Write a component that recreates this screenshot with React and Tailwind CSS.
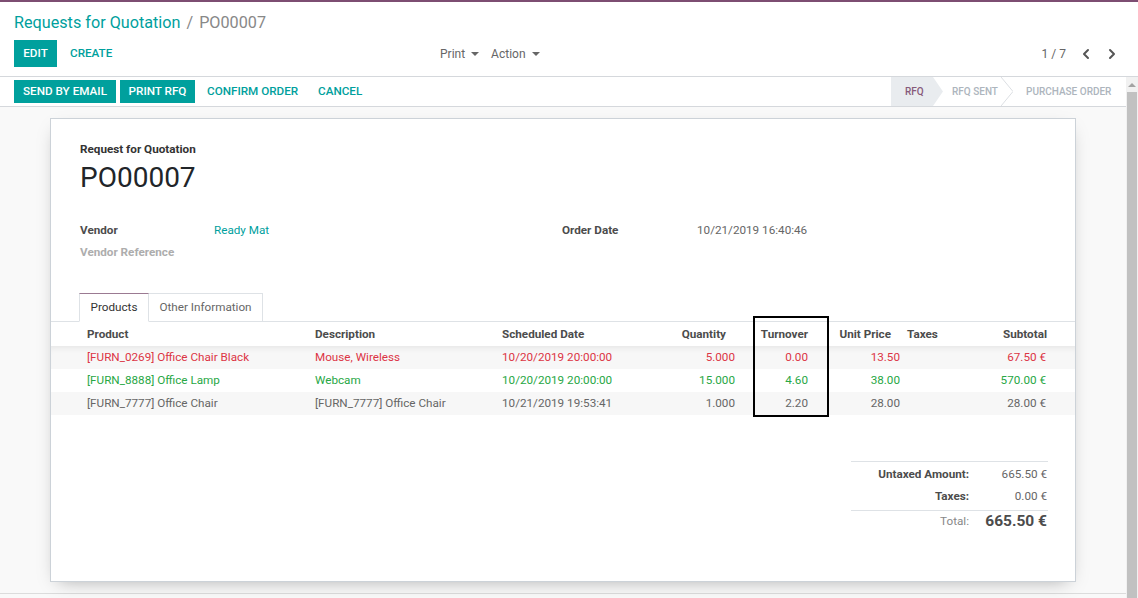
import React from 'react';
import { ChevronLeft, ChevronRight } from 'lucide-react';

function Caret() {
  return <span className="inline-block ml-[6px] w-0 h-0 border-x-[4px] border-x-transparent border-t-[4px] border-t-[#666]" />;
}

const rows = [
  { c: 'text-[#dc3545]', bg: 'bg-[#f7f7f7] shadow-[inset_0_6px_6px_-4px_rgba(0,0,0,0.07)]', p: '[FURN_0269] Office Chair Black', d: 'Mouse, Wireless', s: '10/20/2019 20:00:00', q: '5.000', t: '0.00', u: '13.50', st: '67.50 €' },
  { c: 'text-[#28a745]', bg: 'bg-white', p: '[FURN_8888] Office Lamp', d: 'Webcam', s: '10/20/2019 20:00:00', q: '15.000', t: '4.60', u: '38.00', st: '570.00 €' },
  { c: 'text-[#666]', bg: 'bg-[#f7f7f7]', p: '[FURN_7777] Office Chair', d: '[FURN_7777] Office Chair', s: '10/21/2019 19:53:41', q: '1.000', t: '2.20', u: '28.00', st: '28.00 €' },
];

export default function App() {
  return (
    <div className="h-[598px] w-[1138px] flex flex-col overflow-hidden font-['Roboto','Liberation_Sans',sans-serif] text-[11.7px] text-[#4c4c4c] bg-white">
      <div className="h-[2px] bg-[#7d4d72] shrink-0" />
      {/* control panel */}
      <div className="shrink-0 h-[75px] border-b border-[#d5d8dc] px-[14px] pt-[8px]">
        <div className="h-[24px] pt-[2px] leading-[22px] text-[16.2px] flex items-center whitespace-nowrap">
          <span className="text-[#00a09d]">Requests for Quotation</span>
          <span className="text-[#888] mx-[6px]">/</span>
          <span className="text-[#888]">PO00007</span>
        </div>
        <div className="mt-[6px] h-[27px] flex items-center">
          <div className="w-[426px] flex items-center">
            <div className="h-[27px] w-[43px] bg-[#00a09d] text-white font-medium flex items-center justify-center">EDIT</div>
            <div className="ml-[13px] text-[#00a09d] font-medium">CREATE</div>
          </div>
          <div className="flex items-center text-[12px] text-[#666]">
            <span className="flex items-center">Print<Caret /></span>
            <span className="flex items-center ml-[12px]">Action<Caret /></span>
          </div>
          <div className="ml-auto flex items-center text-[12px] text-[#666] pr-[4px]">
            <span>1 / 7</span>
            <ChevronLeft className="ml-[12px]" size={16} strokeWidth={3} color="#555" />
            <ChevronRight className="ml-[10px]" size={16} strokeWidth={3} color="#555" />
          </div>
        </div>
      </div>
      {/* main */}
      <div className="flex-1 flex min-h-0">
        <div className="flex-1 flex flex-col bg-[#f9f9f9] min-w-0">
          {/* statusbar */}
          <div className="shrink-0 h-[30px] bg-white border-b border-[#d5d8dc] flex items-center pl-[14px] font-medium whitespace-nowrap">
            <div className="h-[23px] w-[102px] bg-[#00a09d] text-white flex items-center justify-center">SEND BY EMAIL</div>
            <div className="ml-[4px] h-[23px] w-[75px] bg-[#00a09d] text-white flex items-center justify-center">PRINT RFQ</div>
            <div className="ml-[12px] w-[111px] text-[#00a09d]">CONFIRM ORDER</div>
            <div className="text-[#00a09d]">CANCEL</div>
            <div className="ml-auto self-stretch flex items-stretch text-[10px] font-medium">
              <div className="w-[52px] bg-[#e9ecef] text-[#875a7b] flex items-center pl-[14px] [clip-path:polygon(0_0,calc(100%-10px)_0,100%_50%,calc(100%-10px)_100%,0_100%)]">RFQ</div>
              <div className="pl-[9px] w-[55px] text-[#adb5bd] flex items-center">RFQ SENT</div>
              <div className="w-[28px] flex items-center pl-[3px]">
                <svg width="12" height="29" viewBox="0 0 12 29"><polyline points="0,0 12,14.5 0,29" fill="none" stroke="#dcdfe3" strokeWidth="1" /></svg>
              </div>
              <div className="w-[100px] text-[#adb5bd] flex items-center">PURCHASE ORDER</div>
            </div>
          </div>
          {/* sheet */}
          <div className="relative shrink-0 mx-auto mt-[11px] w-[1026px] h-[464px] bg-white border border-[#ccd2d8] shadow-[0_6px_18px_-8px_rgba(0,0,0,0.35)] px-[29px] pt-[21px]">
            <div className="leading-[18px] font-bold text-[#333]">Request for Quotation</div>
            <div className="mt-[3px] text-[28px] leading-[34px] text-[#212529]">PO00007</div>
            <div className="mt-[24px] flex">
              <div className="w-[482px]">
                <div className="flex h-[22px] pt-[2px] items-center">
                  <span className="w-[134px] font-bold">Vendor</span>
                  <span className="text-[#00a09d]">Ready Mat</span>
                </div>
                <div className="flex h-[22px] pt-[2px] items-center">
                  <span className="font-bold text-[#adadad]">Vendor Reference</span>
                </div>
              </div>
              <div>
                <div className="flex h-[22px] pt-[2px] items-center">
                  <span className="w-[135px] font-bold">Order Date</span>
                  <span className="text-[#666]">10/21/2019 16:40:46</span>
                </div>
              </div>
            </div>
            {/* tabs */}
            <div className="mt-[30px] -mx-[29px] pl-[28px] flex border-b border-[#dee2e6] h-[29px]">
              <div className="h-[29px] w-[70px] bg-white border border-[#dee2e6] border-t-[#9b7a92] border-b-white flex items-center justify-center text-[#333]">Products</div>
              <div className="h-[28px] w-[114px] border border-l-0 border-b-0 border-[#dee2e6] flex items-center justify-center text-[#666]">Other Information</div>
            </div>
            {/* table */}
            <div className="-mx-[29px]">
              <div className="flex h-[24px] pt-[1px] items-center font-bold whitespace-nowrap">
                <div className="w-[28px]" />
                <div className="w-[228px] pl-[8px]">Product</div>
                <div className="w-[187px] pl-[8px]">Description</div>
                <div className="w-[159px] pl-[8px]">Scheduled Date</div>
                <div className="w-[90px] pr-[17px] text-right">Quantity</div>
                <div className="w-[73px] pr-[8px] text-right">Turnover</div>
                <div className="w-[84px] pr-[9px] text-right">Unit Price</div>
                <div className="w-[60px] pl-[7px]">Taxes</div>
                <div className="w-[95px] pr-[8px] text-right">Subtotal</div>
              </div>
              {rows.map((r, i) => (
                <div key={i} className={`flex h-[23px] pt-[1px] items-center whitespace-nowrap ${r.c} ${r.bg}`}>
                  <div className="w-[28px]" />
                  <div className="w-[228px] pl-[8px]">{r.p}</div>
                  <div className="w-[187px] pl-[8px]">{r.d}</div>
                  <div className="w-[159px] pl-[8px]">{r.s}</div>
                  <div className="w-[90px] pr-[8px] text-right">{r.q}</div>
                  <div className="w-[73px] pr-[8px] text-right">{r.t}</div>
                  <div className="w-[84px] text-right">{r.u}</div>
                  <div className="w-[60px] pl-[7px]" />
                  <div className="w-[95px] pr-[9px] text-right">{r.st}</div>
                </div>
              ))}
            </div>
            {/* totals */}
            <div className="mt-[46px] ml-auto -mr-[2px] w-[197px] border-t border-[#dee2e6]">
              <div className="flex h-[22px] pt-[3px] items-center">
                <div className="flex-1 text-right font-bold">Untaxed Amount:</div>
                <div className="w-[79px] text-right pr-[1px] text-[#666]">665.50 €</div>
              </div>
              <div className="flex h-[22px] pt-[3px] items-center">
                <div className="flex-1 text-right font-bold">Taxes:</div>
                <div className="w-[79px] text-right pr-[1px] text-[#666]">0.00 €</div>
              </div>
              <div className="mt-[4px] border-t border-[#dee2e6] flex h-[21px] pt-[1px] items-center">
                <div className="flex-1 text-right text-[#888]">Total:</div>
                <div className="w-[79px] text-right pr-[1px] text-[15.5px] font-bold text-[#4c4c4c]">665.50 €</div>
              </div>
            </div>
            {/* annotation box */}
            <div className="absolute left-[702px] top-[197px] w-[76px] h-[101px] border-2 border-black" />
          </div>
          <div className="flex-1" />
          <div className="shrink-0 h-[5px] border-t border-[#dcdcdc]" />
        </div>
        {/* scrollbar */}
        <div className="w-[12px] shrink-0 bg-[#f1f1f1] flex flex-col">
          <div className="h-[15px] flex items-center justify-center">
            <span className="w-0 h-0 border-x-[4px] border-x-transparent border-b-[4px] border-b-[#a3a3a3]" />
          </div>
          <div className="flex-1 mx-[1px] bg-[#c1c1c1]" />
        </div>
      </div>
    </div>
  );
}
